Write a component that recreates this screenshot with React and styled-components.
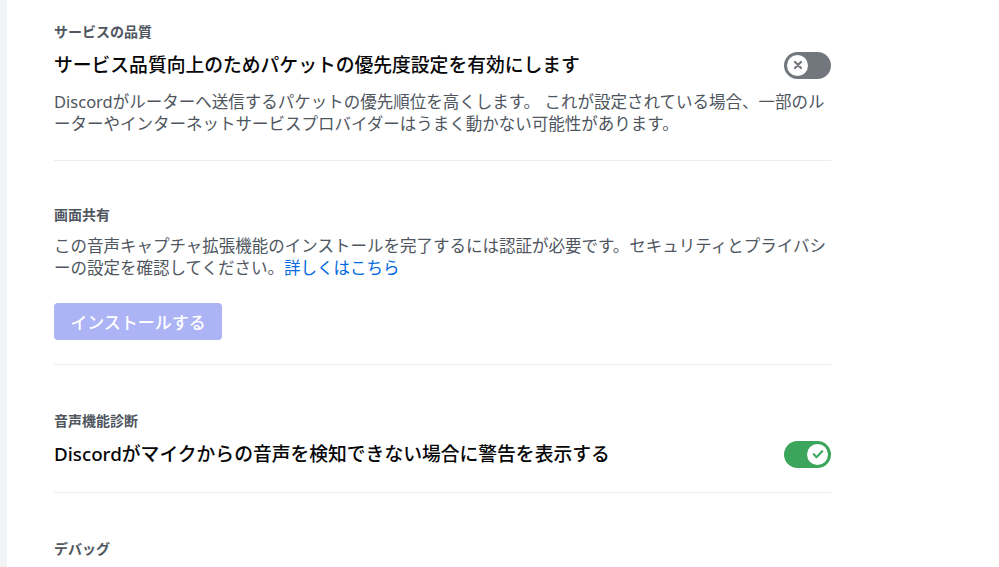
import React from 'react';
import styled, { createGlobalStyle } from 'styled-components';

const GlobalStyle = createGlobalStyle`
  html, body {
    margin: 0;
    padding: 0;
    background: #ffffff;
    font-family: "Noto Sans", "Noto Sans CJK JP", sans-serif;
  }
`;

const Page = styled.div`
  display: flex;
  width: 999px;
  height: 567px;
  overflow: hidden;
  background: #ffffff;
`;

const Rail = styled.div`
  width: 7px;
  flex-shrink: 0;
  background: #f2f3f5;
`;

const Content = styled.div`
  width: 777px;
  padding-left: 47px;
  padding-top: 23px;
`;

const Section = styled.section`
  padding-top: ${p => p.top || 0}px;
`;

const Header = styled.h5`
  margin: 0;
  font-size: 14px;
  line-height: 18px;
  font-weight: 700;
  color: #4f5660;
`;

const Row = styled.div`
  display: flex;
  align-items: center;
  justify-content: space-between;
  margin-top: 10px;
`;

const Title = styled.div`
  font-size: 18.8px;
  line-height: 28px;
  font-weight: 500;
  color: #060607;
`;

const Description = styled.div`
  margin-top: ${p => p.top || 0}px;
  font-size: 16.5px;
  line-height: 22px;
  color: #4f5660;
`;

const Link = styled.a`
  color: #0068e0;
  text-decoration: none;
  cursor: pointer;
`;

const Divider = styled.div`
  height: 1px;
  background: #ebedef;
  margin-top: ${p => p.top || 24}px;
`;

const Button = styled.button`
  margin-top: 24px;
  width: 168px;
  height: 37px;
  border: none;
  border-radius: 4px;
  background: #acb4f5;
  color: #ffffff;
  font-family: inherit;
  font-size: 17px;
  font-weight: 500;
  cursor: not-allowed;
`;

const Track = styled.div`
  position: relative;
  width: 47px;
  height: 27px;
  border-radius: 14px;
  background: ${p => (p.on ? '#3ba55c' : '#72767d')};
  flex-shrink: 0;
`;

const Knob = styled.div`
  position: absolute;
  top: 3px;
  left: ${p => (p.on ? '23px' : '3px')};
  width: 21px;
  height: 21px;
  border-radius: 50%;
  background: #ffffff;
  display: flex;
  align-items: center;
  justify-content: center;
`;

const Toggle = ({ on }) => (
  <Track on={on ? 1 : 0}>
    <Knob on={on ? 1 : 0}>
      {on ? (
        <svg width="14" height="14" viewBox="0 0 20 20">
          <path d="M4 10.5l4 4 8-8.5" fill="none" stroke="#3ba55c" strokeWidth="3" strokeLinecap="round" strokeLinejoin="round" />
        </svg>
      ) : (
        <svg width="12" height="12" viewBox="0 0 20 20">
          <path d="M5 5l10 10M15 5L5 15" fill="none" stroke="#72767d" strokeWidth="3.6" strokeLinecap="round" />
        </svg>
      )}
    </Knob>
  </Track>
);

export default function App() {
  return (
    <>
      <GlobalStyle />
      <Page>
        <Rail />
        <Content>
          <Section>
            <Header>サービスの品質</Header>
            <Row>
              <Title>サービス品質向上のためパケットの優先度設定を有効にします</Title>
              <Toggle on={false} />
            </Row>
            <Description top={12}>
              Discordがルーターへ送信するパケットの優先順位を高くします。 これが設定されている場合、一部のルーターやインターネットサービスプロバイダーはうまく動かない可能性があります。
            </Description>
            <Divider top={25} />
          </Section>
          <Section top={45}>
            <Header>画面共有</Header>
            <Description top={11}>
              この音声キャプチャ拡張機能のインストールを完了するには認証が必要です。セキュリティとプライバシーの設定を確認してください。<Link>詳しくはこちら</Link>
            </Description>
            <Button disabled>インストールする</Button>
            <Divider top={24} />
          </Section>
          <Section top={47}>
            <Header>音声機能診断</Header>
            <Row>
              <Title>Discordがマイクからの音声を検知できない場合に警告を表示する</Title>
              <Toggle on />
            </Row>
            <Divider top={24} />
          </Section>
          <Section top={47}>
            <Header>デバッグ</Header>
          </Section>
        </Content>
      </Page>
    </>
  );
}
